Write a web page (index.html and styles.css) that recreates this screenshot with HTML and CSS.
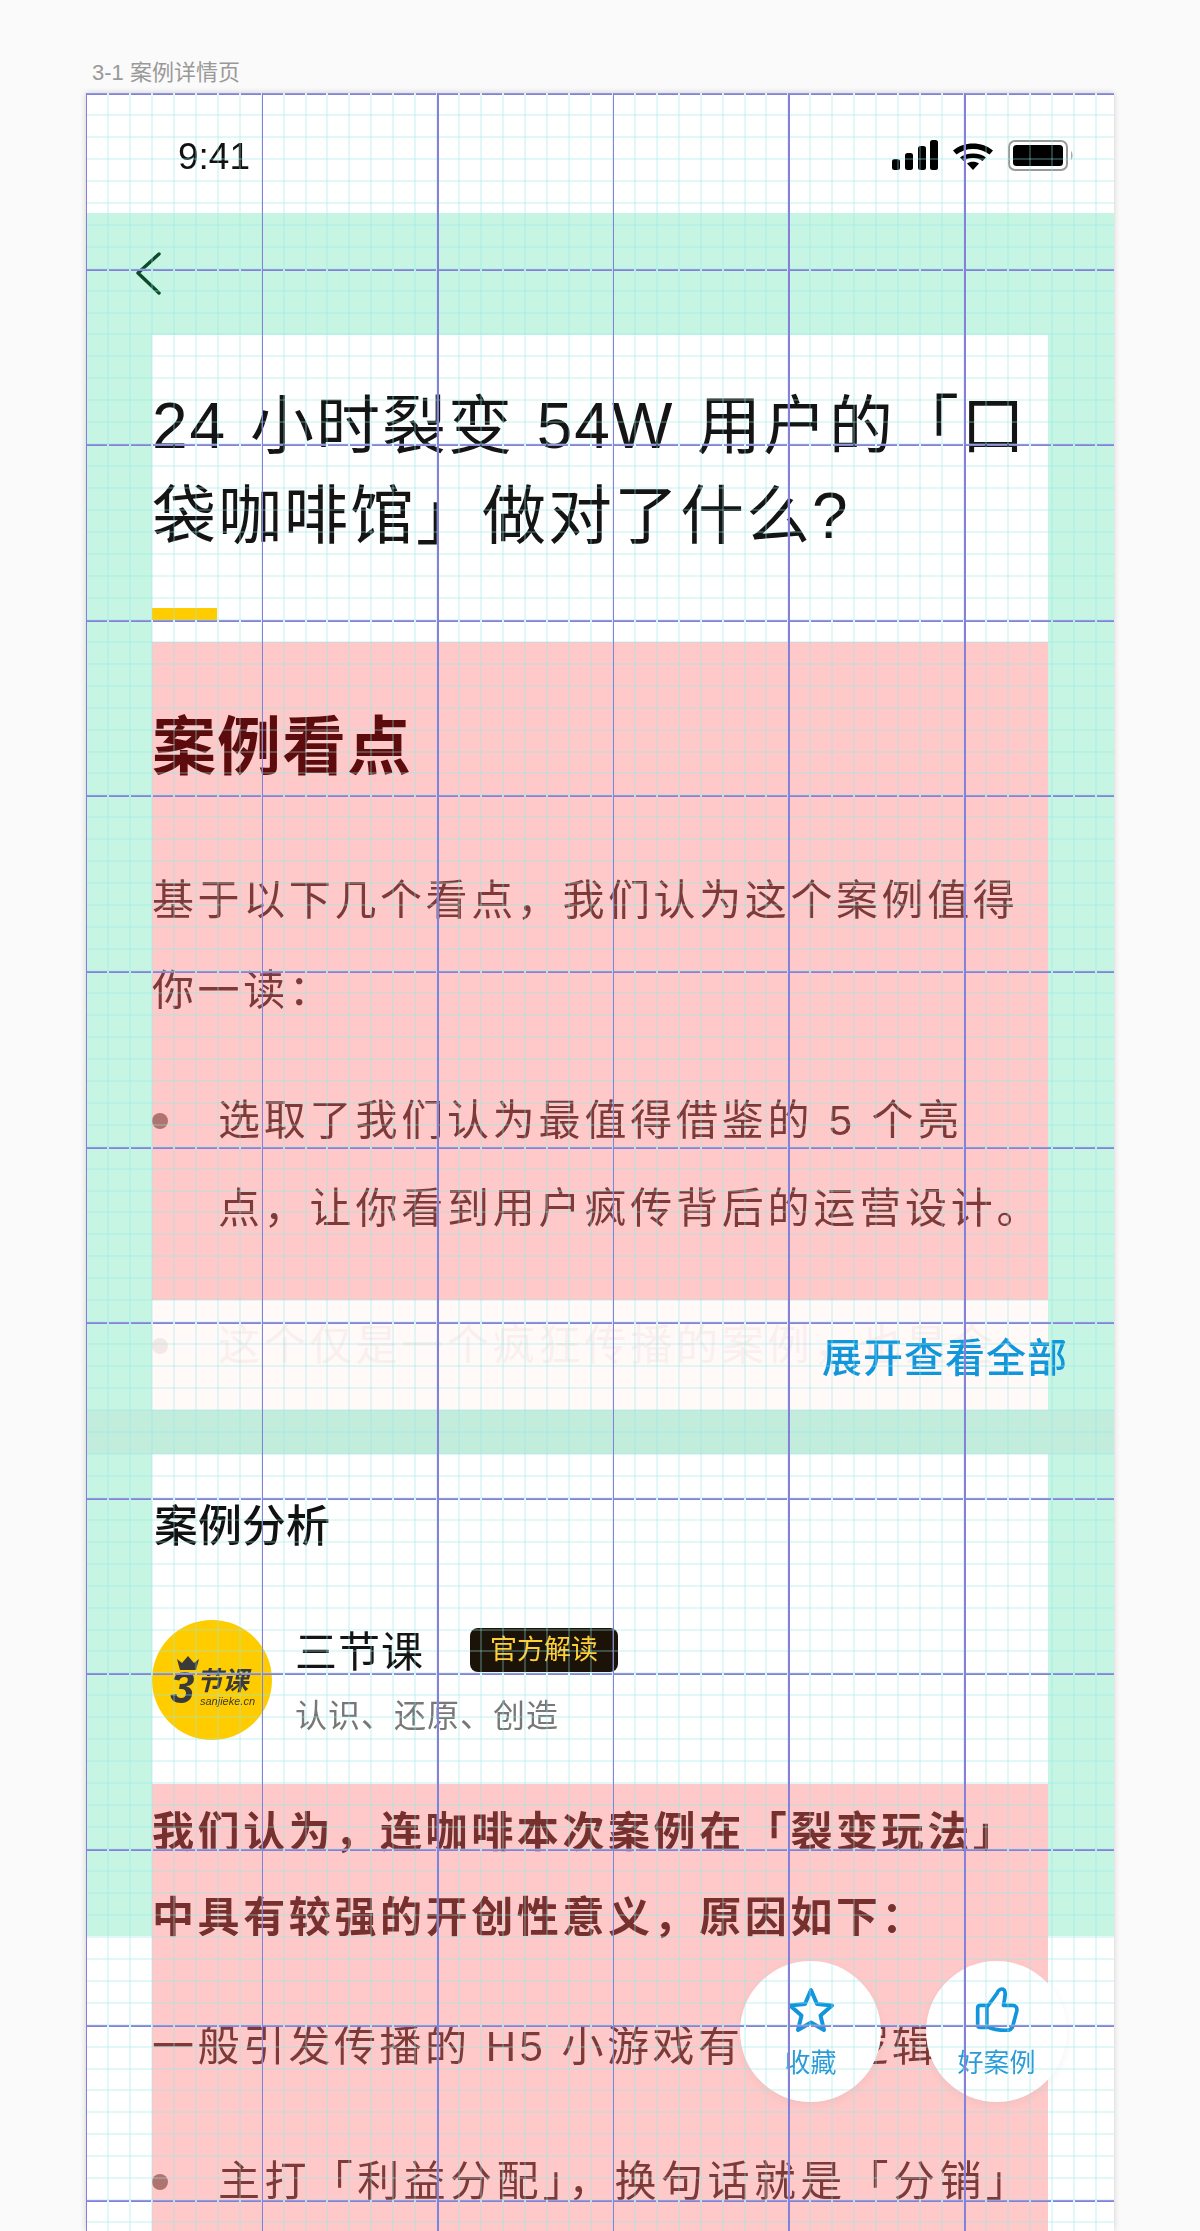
FILE: index.html
```html
<!DOCTYPE html>
<html lang="zh-CN">
<head>
<meta charset="utf-8">
<title>3-1 案例详情页</title>
<link rel="stylesheet" href="styles.css">
</head>
<body>
<div class="frame-label">3-1 案例详情页</div>
<div class="phone">
  <header class="status">
    <span class="time">9:41</span>
    <div class="status-icons">
      <svg class="ic-signal" width="46" height="30" viewBox="0 0 46 30"><rect x="0" y="19" width="8" height="11" rx="2.5"/><rect x="13" y="13" width="8" height="17" rx="2.5"/><rect x="26" y="6" width="8" height="24" rx="2.5"/><rect x="38" y="0" width="8" height="30" rx="2.5"/></svg>
      <svg class="ic-wifi" width="42" height="30" viewBox="0 0 42 30"><path d="M1 10.500C11.500 1 30.500 1 41 10.500L37.500 14.500C29 7 13 7 4.500 14.500Z"/><path d="M8 17.500C14 12 28 12 34 17.500L30.500 21C25.500 17 16.500 17 11.500 21Z"/><path d="M15 23.500C18 21 24 21 27 23.500L21 30Z"/></svg>
      <svg class="ic-battery" width="66" height="31" viewBox="0 0 66 31"><rect class="bat-shell" x="1" y="1" width="58" height="29" rx="6"/><rect x="5" y="5" width="50" height="21" rx="3.500"/><path class="bat-nub" d="M63 11C65 12 65 19 63 20Z"/></svg>
    </div>
  </header>
  <main class="mint">
    <nav class="nav">
      <svg width="26" height="44" viewBox="0 0 26 44"><path class="chev" d="M23 3L2 22L23 42"/></svg>
    </nav>
    <section class="card">
      <h1 class="title">24 小时裂变 54W 用户的「口袋咖啡馆」做对了什么?</h1>
      <div class="accent"></div>
      <div class="pink">
        <h2 class="pink-head">案例看点</h2>
        <p class="para">基于以下几个看点&#xFF0C;我们认为这个案例值得<br>你一读&#xFF1A;</p>
        <ul class="list">
          <li>选取了我们认为最值得借鉴的 5 个亮<br>点&#xFF0C;让你看到用户疯传背后的运营设计。</li>
        </ul>
      </div>
      <div class="fade">
        <ul class="list list-faded"><li>这个仅是一个疯狂传播的案例&#xFF0C;也是企</li></ul>
        <a class="expand">展开查看全部</a>
      </div>
    </section>
    <div class="band"></div>
    <section class="card card-analysis">
      <h3 class="sec-title">案例分析</h3>
      <div class="author">
        <div class="avatar">
          <svg class="crown" width="26" height="14" viewBox="0 0 26 14"><path d="M2 3L7 7L13 0L19 7L24 3L21 14H5Z"/></svg>
          <div class="logo-main"><span class="logo-3">3</span><span class="logo-cn">节课</span></div>
          <span class="logo-url">sanjieke.cn</span>
        </div>
        <div class="author-info">
          <div class="author-top"><span class="author-name">三节课</span><span class="tag">官方解读</span></div>
          <div class="author-sub">认识、还原、创造</div>
        </div>
      </div>
      <div class="pink pink-analysis">
        <p class="para para-bold">我们认为&#xFF0C;连咖啡本次案例在「裂变玩法」<br>中具有较强的开创性意义&#xFF0C;原因如下&#xFF1A;</p>
        <p class="para para-wide">一般引发传播的 H5 小游戏有 3 个逻辑&#xFF1A;</p>
        <ul class="list"><li>主打「利益分配」&#xFF0C;换句话就是「分销」</li></ul>
      </div>
    </section>
  </main>
  <div class="fabs">
    <div class="fab">
      <svg width="48" height="46" viewBox="0 0 48 46"><path class="fab-ic" d="M24 3L30 17L45 18.500L33.500 28.500L37 43L24 35.500L11 43L14.500 28.500L3 18.500L18 17Z"/></svg>
      <span class="fab-text">收藏</span>
    </div>
    <div class="fab">
      <svg width="48" height="50" viewBox="0 0 48 50"><path class="fab-ic" d="M13 22L24 7C25 3 29 1 31.500 3C34 5 33 9 31 20H41C45 20 46 23 45.500 26L41 43C40 46 37 47 34 47C27 47 19 46 13 43Z"/><path class="fab-ic" d="M13 20H6C4 20 3 21 3 23V41C3 43 4 44 6 44H13"/></svg>
      <span class="fab-text">好案例</span>
    </div>
  </div>
  <div class="grid-major-h"></div>
  <div class="grid-lines"></div>
</div>
</body>
</html>
```
FILE: styles.css
```css
* { box-sizing: border-box; }
html, body { margin: 0; padding: 0; }
body {
  height: 2231px;
  overflow: hidden;
  background: #fafafa;
  font-family: "Liberation Sans", "Noto Sans CJK SC", sans-serif;
  padding: 0 86px;
}
.frame-label {
  height: 93px;
  padding: 57px 0 0 6px;
  font-size: 22px;
  line-height: 32px;
  color: #999;
}
.phone {
  position: relative;
  height: 2138px;
  background: #fff;
  overflow: hidden;
  box-shadow: 0 0 6px rgba(0,0,0,.18);
  filter: blur(.45px);
}
.status {
  height: 120px;
  display: flex;
  justify-content: space-between;
  align-items: flex-start;
  padding: 43px 40px 0 92px;
}
.time { font-size: 37px; line-height: 42px; color: #111; }
.status-icons { display: flex; gap: 14px; padding-top: 4px; }
.ic-signal, .ic-wifi { fill: #000; }
.ic-battery { fill: #000; }
.bat-shell { fill: none; stroke: #999; stroke-width: 2; }
.bat-nub { fill: #aaa; }
.mint {
  height: 1723px;
  background: #c6f5e3;
}
.nav { height: 122px; padding: 38px 0 0 50px; }
.chev { fill: none; stroke: #0c4a2c; stroke-width: 3.400; stroke-linecap: round; stroke-linejoin: round; }
.card { margin: 0 66px; background: #fff; }
.title {
  margin: 0;
  padding-top: 46px;
  font-size: 64px;
  font-weight: 400;
  line-height: 90px;
  letter-spacing: 2px;
  word-spacing: 3px;
  color: #141414;
}
.accent { width: 65px; height: 12px; margin-top: 47px; background: #ffcc00; }
.pink { margin-top: 22px; background: #ffc9c9; height: 658px; padding-top: 60px; }
.pink-head { margin: 0; font-size: 64px; line-height: 90px; letter-spacing: 1px; font-weight: 700; color: #5c0c0c; }
.para { margin: 64px 0 0; font-size: 42px; line-height: 90px; letter-spacing: 3.600px; color: #7c3a38; white-space: nowrap; }
.list { margin: 41px 0 0; padding: 0 0 0 66px; list-style: none; }
.list li { position: relative; font-size: 42px; line-height: 88px; letter-spacing: 3.800px; color: #7c3a38; white-space: nowrap; }
.list li::before {
  content: "";
  position: absolute;
  left: -66px;
  top: 36px;
  width: 16px;
  height: 16px;
  border-radius: 50%;
  background: #b07470;
}
.fade { position: relative; height: 110px; background: #fff9f8; }
.list-faded { margin: 0; padding-top: 2px; overflow: hidden; height: 100px; }
.list-faded li { color: #f9efee; }
.list-faded li::before { background: #f4e8e7; }
.expand {
  position: absolute;
  right: -20px;
  top: 32px;
  font-size: 40px;
  line-height: 52px;
  letter-spacing: 1px;
  font-weight: 500;
  color: #1296db;
  white-space: nowrap;
}
.band { height: 44px; background: #c2ecdc; }
.card-analysis { height: 900px; padding-top: 43px; }
.sec-title { margin: 0 0 0 2px; font-size: 44px; line-height: 60px; font-weight: 500; color: #111; }
.author { display: flex; gap: 23px; margin-top: 63px; }
.avatar {
  position: relative;
  flex: none;
  width: 120px;
  height: 120px;
  border-radius: 50%;
  background: #ffcc00;
  color: #3a3a3a;
}
.crown { position: absolute; left: 23px; top: 36px; fill: #3a3a3a; }
.logo-main { position: absolute; left: 18px; top: 46px; display: flex; align-items: flex-start; font-style: italic; font-weight: 700; white-space: nowrap; }
.logo-3 { font-size: 44px; line-height: 44px; }
.logo-cn { margin: 2px 0 0 2px; font-size: 26px; line-height: 26px; }
.logo-url { position: absolute; left: 48px; top: 75px; font-size: 11px; line-height: 12px; font-style: italic; white-space: nowrap; }
.author-info { padding-top: 2px; }
.author-top { display: flex; align-items: center; gap: 46px; height: 56px; }
.author-name { margin-top: 6px; font-size: 42px; line-height: 56px; letter-spacing: 1px; color: #141414; }
.tag {
  width: 148px;
  height: 44px;
  border-radius: 8px;
  background: #1b1308;
  color: #ffcf33;
  font-size: 27px;
  line-height: 44px;
  text-align: center;
}
.author-sub { margin-top: 15px; font-size: 32px; line-height: 46px; letter-spacing: 1px; color: #777; }
.pink-analysis { margin-top: 44px; height: 460px; padding-top: 6px; }
.para-bold { margin: 0; font-weight: 700; letter-spacing: 3.600px; line-height: 85px; color: #76302e; }
.para-wide { margin: 42px 0 0; letter-spacing: 3.500px; }
.pink-analysis .list { margin-top: 46px; }
.pink-analysis .list li { letter-spacing: 4.400px; }
.fabs { position: absolute; left: 654px; top: 1868px; display: flex; gap: 45px; }
.fab {
  width: 141px;
  height: 141px;
  border-radius: 50%;
  background: #fff;
  box-shadow: 0 3px 10px rgba(0,0,0,.05);
  display: flex;
  flex-direction: column;
  align-items: center;
  padding-top: 26px;
}
.fab svg { height: 46px; flex: none; }
.fab-ic { fill: none; stroke: #1296db; stroke-width: 4; stroke-linejoin: round; stroke-linecap: round; }
.fab-text { margin-top: 12px; font-size: 26px; line-height: 36px; color: #2a9bd6; white-space: nowrap; }
.grid-major-h {
  position: absolute;
  inset: 0;
  pointer-events: none;
  background-image: repeating-linear-gradient(to bottom, #8a7fd8 0, #8a7fd8 2px, transparent 2px, transparent 175.600px);
  -webkit-mask-image: repeating-linear-gradient(to right, transparent 0, transparent 1px, #000 1px, #000 20.950px, transparent 20.950px, transparent 21.950px);
  mask-image: repeating-linear-gradient(to right, transparent 0, transparent 1px, #000 1px, #000 20.950px, transparent 20.950px, transparent 21.950px);
}
.grid-lines {
  position: absolute;
  inset: 0;
  pointer-events: none;
  background-image:
    repeating-linear-gradient(to right, #8a7fd8 0, #8a7fd8 1.500px, transparent 1.500px, transparent 175.600px),
    repeating-linear-gradient(to right, rgba(150,230,230,.28) 0, rgba(150,230,230,.28) 1px, transparent 1px, transparent 20.950px, rgba(150,230,230,.28) 20.950px, rgba(150,230,230,.28) 21.950px),
    repeating-linear-gradient(to bottom, rgba(150,230,230,.28) 0, rgba(150,230,230,.28) 1px, transparent 1px, transparent 20.950px, rgba(150,230,230,.28) 20.950px, rgba(150,230,230,.28) 21.950px);
}
```
